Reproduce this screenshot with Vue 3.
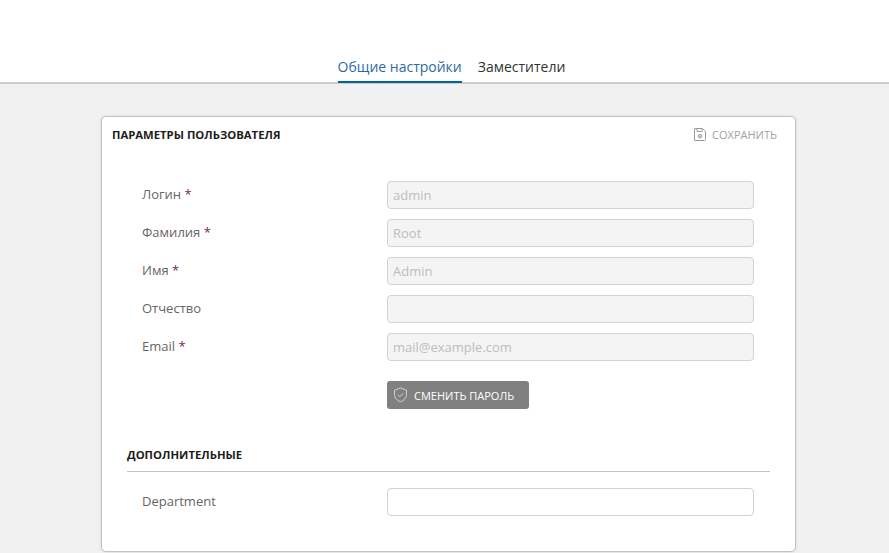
<script setup>
const fields = [
  { label: 'Логин', required: true, value: 'admin' },
  { label: 'Фамилия', required: true, value: 'Root' },
  { label: 'Имя', required: true, value: 'Admin' },
  { label: 'Отчество', required: false, value: '' },
  { label: 'Email', required: true, value: 'mail@example.com' },
]
</script>

<template>
  <div class="page">
    <nav class="tabs">
      <a class="tab active">Общие настройки</a>
      <a class="tab">Заместители</a>
    </nav>
    <main class="content">
      <section class="card">
        <header class="card-head">
          <h2 class="title">ПАРАМЕТРЫ ПОЛЬЗОВАТЕЛЯ</h2>
          <span class="save">
            <svg width="12" height="13" viewBox="0 0 12 13" fill="none" stroke="#9a9a9a" stroke-width="1">
              <path d="M1 .5h7.5l3 3v8a1 1 0 0 1-1 1H1a.5.5 0 0 1-.5-.5V1A.5.5 0 0 1 1 .5z" />
              <path d="M3 .5v3h5v-3" />
              <circle cx="6" cy="8.2" r="1.8" />
              <circle cx="6" cy="8.2" r=".4" />
            </svg>
            СОХРАНИТЬ
          </span>
        </header>
        <div class="form">
          <div v-for="f in fields" :key="f.label" class="row">
            <label class="label">{{ f.label }}<span v-if="f.required" class="req"> *</span></label>
            <input class="input" disabled :value="f.value" />
          </div>
          <div class="row btn-row">
            <span></span>
            <button class="btn" type="button">
              <svg width="15" height="16" viewBox="0 0 15 16" fill="none" stroke="#d4d4d4" stroke-width="1">
                <path d="M7.5 1l6 2.2v4.3c0 3.4-2.5 5.9-6 7.3-3.5-1.4-6-3.9-6-7.3V3.2z" />
                <path d="M4.8 7.8l2 2 3.5-3.6" />
              </svg>
              СМЕНИТЬ ПАРОЛЬ
            </button>
          </div>
        </div>
        <h3 class="subtitle">ДОПОЛНИТЕЛЬНЫЕ</h3>
        <div class="form extra">
          <div class="row">
            <label class="label">Department</label>
            <input class="input open" />
          </div>
        </div>
      </section>
    </main>
  </div>
</template>

<style scoped>
.page {
  width: 889px;
  height: 553px;
  overflow: hidden;
  background: #f1f1f1;
  font-family: "Open Sans", sans-serif;
  font-size: 13px;
  color: #666;
}
.tabs {
  height: 82px;
  background: #fff;
  border-bottom: 2px solid #cccccc;
  display: flex;
  justify-content: center;
  align-items: flex-end;
  gap: 16px;
  padding-left: 14px;
}
.tab {
  margin-bottom: -1px;
  padding-top: 6px;
  box-sizing: border-box;
  height: 33px;
  line-height: 22px;
  font-size: 14px;
  color: #333;
  border-bottom: 2px solid transparent;
}
.tab.active {
  color: #2d6a9f;
  border-bottom-color: #00659c;
}
.content {
  padding: 32px 93px 0 101px;
}
.card {
  box-sizing: border-box;
  width: 695px;
  height: 436px;
  background: #fff;
  border: 1px solid #c2c2c2;
  border-radius: 5px;
  box-shadow: 0 0 3px rgba(0, 0, 0, 0.12);
  padding: 0 25px;
}
.card-head {
  display: flex;
  justify-content: space-between;
  align-items: center;
  margin: 0 -7px 0 -15px;
  height: 34px;
}
.title, .subtitle {
  margin: 0;
  font-size: 11.3px;
  font-weight: 700;
  color: #1c1c1c;
}
.save {
  display: flex;
  align-items: center;
  gap: 6px;
  font-size: 11px;
  color: #a0a0a0;
}
.form {
  padding: 30px 16px 0 15px;
  display: flex;
  flex-direction: column;
  gap: 10px;
}
.row {
  display: grid;
  grid-template-columns: 245px 367px;
  align-items: start;
}
.label {
  line-height: 26px;
  height: 26px;
}
.req {
  color: #7a1f5c;
}
.input {
  box-sizing: border-box;
  width: 367px;
  height: 28px;
  padding: 0 5px;
  border: 1px solid #d2d2d2;
  border-radius: 4px;
  background: #f4f4f4;
  font: 13px "Open Sans", sans-serif;
  color: #bdbdbd;
  outline: none;
}
.input.open {
  background: #fff;
}
.btn-row {
  margin-top: 10px;
}
.btn {
  display: flex;
  align-items: center;
  gap: 6px;
  width: 142px;
  height: 28px;
  padding: 0 0 0 6px;
  border: 0;
  border-radius: 3px;
  background: #808080;
  color: #fff;
  font: 11px "Open Sans", sans-serif;
}
.subtitle {
  margin-top: 38px;
  padding-bottom: 9px;
  border-bottom: 1px solid #c4c4c4;
}
.extra {
  padding-top: 16px;
}
</style>
